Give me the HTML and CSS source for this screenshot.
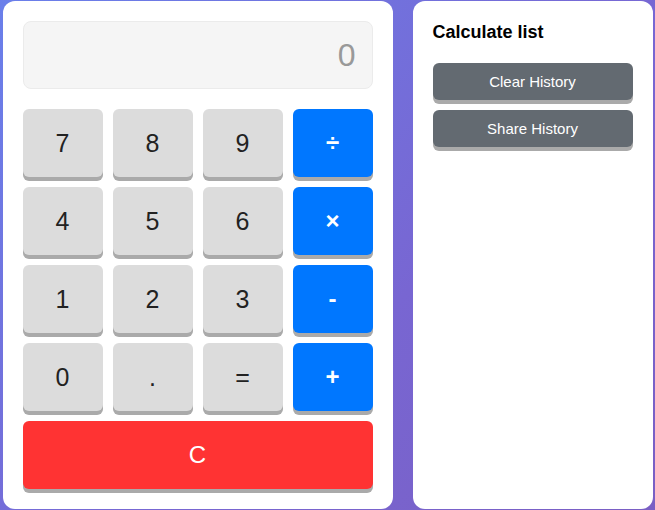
FILE: index.html
```html
<!DOCTYPE html>
<html lang="en">
<head>
<meta charset="utf-8">
<title>Calculator</title>
<link rel="stylesheet" href="styles.css">
</head>
<body>
<main class="page">
  <section class="calculator">
    <div class="display">0</div>
    <div class="keys">
      <button class="key">7</button>
      <button class="key">8</button>
      <button class="key">9</button>
      <button class="key op">÷</button>
      <button class="key">4</button>
      <button class="key">5</button>
      <button class="key">6</button>
      <button class="key op">×</button>
      <button class="key">1</button>
      <button class="key">2</button>
      <button class="key">3</button>
      <button class="key op">-</button>
      <button class="key">0</button>
      <button class="key">.</button>
      <button class="key">=</button>
      <button class="key op">+</button>
      <button class="key clear">C</button>
    </div>
  </section>
  <aside class="history">
    <h3 class="history-title">Calculate list</h3>
    <button class="history-btn">Clear History</button>
    <button class="history-btn">Share History</button>
  </aside>
</main>
</body>
</html>
```

FILE: styles.css
```css
* { box-sizing: border-box; }
html, body { margin: 0; height: 100%; }
body {
  background: linear-gradient(135deg, #6a7fea 0%, #7866d2 60%, #7a5fc4 100%);
  font-family: "Liberation Sans", Arial, sans-serif;
  overflow: hidden;
}
.page {
  height: 100%;
  display: flex;
  justify-content: center;
  align-items: center;
  gap: 20px;
}
.calculator {
  width: 390px;
  height: 508px;
  background: #fff;
  border-radius: 12px;
  padding: 20px;
  display: flex;
  flex-direction: column;
  gap: 20px;
}
.display {
  height: 68px;
  background: #f5f5f5;
  border: 1px solid #ebebeb;
  border-radius: 8px;
  padding: 0 16px;
  display: flex;
  align-items: center;
  justify-content: flex-end;
  font-size: 32px;
  color: #999;
}
.keys {
  display: grid;
  grid-template-columns: repeat(4, 80px);
  grid-auto-rows: 68px;
  gap: 10px;
}
.key {
  border: none;
  border-radius: 6px;
  background: #dcdcdc;
  box-shadow: 0 4px 0 #aaa;
  font-family: inherit;
  font-size: 25px;
  color: #222;
  padding: 0;
}
.key.op {
  background: #0077ff;
  color: #fff;
  font-size: 24px;
  font-weight: bold;
}
.key.clear {
  grid-column: 1 / -1;
  background: #ff3333;
  color: #fff;
  font-size: 24px;
}
.history {
  width: 240px;
  height: 508px;
  background: #fff;
  border-radius: 12px;
  padding: 20px;
  display: flex;
  flex-direction: column;
  align-items: flex-start;
}
.history-title {
  margin: 0 0 20px;
  font-size: 18px;
  line-height: 22px;
  font-weight: bold;
  color: #000;
}
.history-btn {
  width: 200px;
  height: 37px;
  margin-bottom: 10px;
  border: none;
  border-radius: 6px;
  background: #636a71;
  box-shadow: 0 4px 0 #aaa;
  color: #fff;
  font-family: inherit;
  font-size: 15px;
}
```
